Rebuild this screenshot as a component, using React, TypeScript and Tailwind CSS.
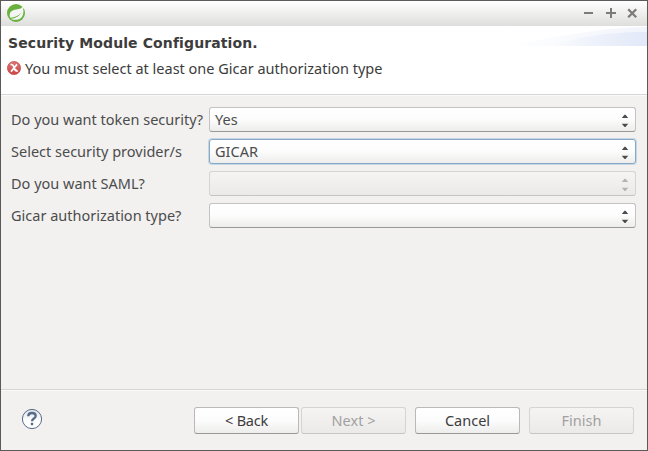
import React from "react";

function Arrows() {
  return (
    <svg width="8" height="13" viewBox="0 0 8 13" fill="currentColor" className="mt-[2px]">
      <path d="M3.5 0.8H4.5L7.2 3.9H0.8Z" />
      <path d="M3.5 12.9H4.5L7.2 9.8H0.8Z" />
    </svg>
  );
}

type ComboState = "normal" | "focused" | "disabled";

const comboStyles: Record<ComboState, string> = {
  normal: "border-[#c4c3c1] border-b-[#999896] bg-linear-to-b from-white via-[#fcfcfc] to-[#ededec] text-[#4c4c4c]",
  focused:
    "border-[#86a8c6] bg-linear-to-b from-white via-[#fcfcfc] to-[#ededec] text-[#4c4c4c] shadow-[0_0_0_1px_#c5d6e4]",
  disabled: "border-[#d5d4d2] border-b-[#c6c5c3] bg-linear-to-b from-[#f5f4f3] to-[#ebeae9] text-[#b4b3b1]",
};

interface FieldProps {
  label: string;
  value?: string;
  state?: ComboState;
}

function Field({ label, value, state = "normal" }: FieldProps) {
  return (
    <div className="flex h-[25px] items-center">
      <span className="w-[198px] shrink-0 whitespace-nowrap pb-[2px] text-[#4c4c4c]">{label}</span>
      <div
        className={`flex h-[25px] w-[427px] items-center justify-between rounded-[3px] border pr-[6px] pl-[5px] ${comboStyles[state]}`}
      >
        <span className="pb-[2px]">{value}</span>
        <Arrows />
      </div>
    </div>
  );
}

function Button({ label, disabled, className }: { label: string; disabled?: boolean; className: string }) {
  const look = disabled
    ? "border-[#d5d4d2] border-b-[#c6c5c3] from-[#f5f4f3] to-[#ebeae9] text-[#a2a1a0]"
    : "border-[#bab9b7] border-b-[#999896] from-white via-[#fcfcfc] to-[#ededec] text-[#3c3c3c]";
  return (
    <button
      disabled={disabled}
      className={`flex h-[27px] w-[105px] items-center justify-center whitespace-nowrap rounded-[3px] border bg-linear-to-b pb-[2px] ${look} ${className}`}
    >
      {label}
    </button>
  );
}

export default function App() {
  return (
    <div className="flex h-[451px] w-[648px] flex-col border border-[#5b5a59] bg-[#f2f1f0] font-['Noto_Sans','Open_Sans',sans-serif] text-[14.5px] leading-5">
      <div className="flex h-[25px] shrink-0 items-center justify-between bg-linear-to-b from-white to-[#dededd] pr-[9px] pl-[6px]">
        <svg width="18" height="18" viewBox="0 0 18 18" className="mb-px">
          <circle cx="9" cy="9" r="9" fill="#68b13e" />
          <path
            d="M15.8 2.6C17.2 8.2 16.6 14.2 11.2 15.4C8 16 5.2 15.6 3.4 14.9C8.9 14.5 12.6 12 14.4 8.6C11.6 12 7.7 13.3 3.4 13.8C1.6 10.4 3.2 6.8 7.8 5.8C11.5 5 14.2 5.2 15.8 2.6Z"
            fill="#f5f6f3"
          />
        </svg>
        <svg width="56" height="12" viewBox="0 0 56 12" fill="none" stroke="#7d7b79" strokeWidth="2" className="mt-[-2px]">
          <path d="M2 6H11" />
          <path d="M24 6H34M29 1V11" />
          <path d="M46.2 2.2L54.2 10.2M54.2 2.2L46.2 10.2" strokeWidth="2.3" />
        </svg>
      </div>

      <div className="relative h-[69px] shrink-0 border-b border-[#d6d5d3] bg-white text-[#3c3c3c]">
        <svg width="140" height="20" viewBox="0 0 140 20" className="absolute top-0 right-0">
          <defs>
            <linearGradient id="wash">
              <stop offset="0" stopColor="#dfe6f7" stopOpacity="0" />
              <stop offset="1" stopColor="#dfe6f7" />
            </linearGradient>
          </defs>
          <path d="M0 20C40 13 85 2 140 1V20Z" fill="url(#wash)" opacity="0.45" />
          <path d="M45 20C70 11 100 6 140 6V20Z" fill="url(#wash)" opacity="0.8" />
        </svg>
        <div className="relative pt-[7px] pl-[7px]">
          <h1 className="h-5 whitespace-nowrap font-['DejaVu_Sans',sans-serif] text-[14px] leading-5 font-bold tracking-[0.11px]">
            Security Module Configuration.
          </h1>
          <div className="mt-[5px] flex h-5 items-center gap-1">
            <svg width="14" height="14" viewBox="0 0 14 14" className="-ml-px shrink-0">
              <defs>
                <linearGradient id="error" x2="0" y2="1">
                  <stop stopColor="#d97575" />
                  <stop offset="1" stopColor="#cf4545" />
                </linearGradient>
              </defs>
              <circle cx="7" cy="7" r="6.6" fill="url(#error)" stroke="#c84b4b" strokeWidth="0.7" />
              <path d="M3.5 3.6Q6.2 3 7 6.5T10.7 10.2M10 3.4L7 7L4 10.6" fill="none" stroke="#fff" strokeWidth="1.7" />
            </svg>
            <span className="whitespace-nowrap">You must select at least one Gicar authorization type</span>
          </div>
        </div>
      </div>

      <div className="flex flex-1 flex-col gap-[7px] border-t border-[#fafafa] pt-[11px] pl-[10px]">
        <Field label="Do you want token security?" value="Yes" />
        <Field label="Select security provider/s" value="GICAR" state="focused" />
        <Field label="Do you want SAML?" state="disabled" />
        <Field label="Gicar authorization type?" />
      </div>

      <div className="flex h-[61px] shrink-0 border-t border-[#d6d5d3]">
        <div className="flex flex-1 items-start border-t border-[#fafafa] pt-4 pl-[20px]">
          <svg width="22" height="22" viewBox="0 0 22 22" className="mt-px mr-[151px]">
            <defs>
              <linearGradient id="help" x2="0" y2="1">
                <stop stopColor="#dfe1e5" />
                <stop offset="0.6" stopColor="#fff" />
              </linearGradient>
            </defs>
            <circle cx="11" cy="11" r="9.6" fill="url(#help)" stroke="#566b8b" strokeWidth="1" />
            <path d="M7.2 8.2C7.3 5.8 8.8 5 11 5C13.4 5 14.7 6.2 14.7 8C14.7 10.6 11 10.4 11 13.3" fill="none" stroke="#566b8b" strokeWidth="2.3" />
            <rect x="9.8" y="14.8" width="2.4" height="2.4" rx="0.6" fill="#566b8b" />
          </svg>
          <Button label="< Back" className="mr-[2px] tracking-[-0.25px]" />
          <Button label="Next >" disabled className="mr-[9px]" />
          <Button label="Cancel" className="mr-[9px]" />
          <Button label="Finish" disabled className="" />
        </div>
      </div>
    </div>
  );
}
